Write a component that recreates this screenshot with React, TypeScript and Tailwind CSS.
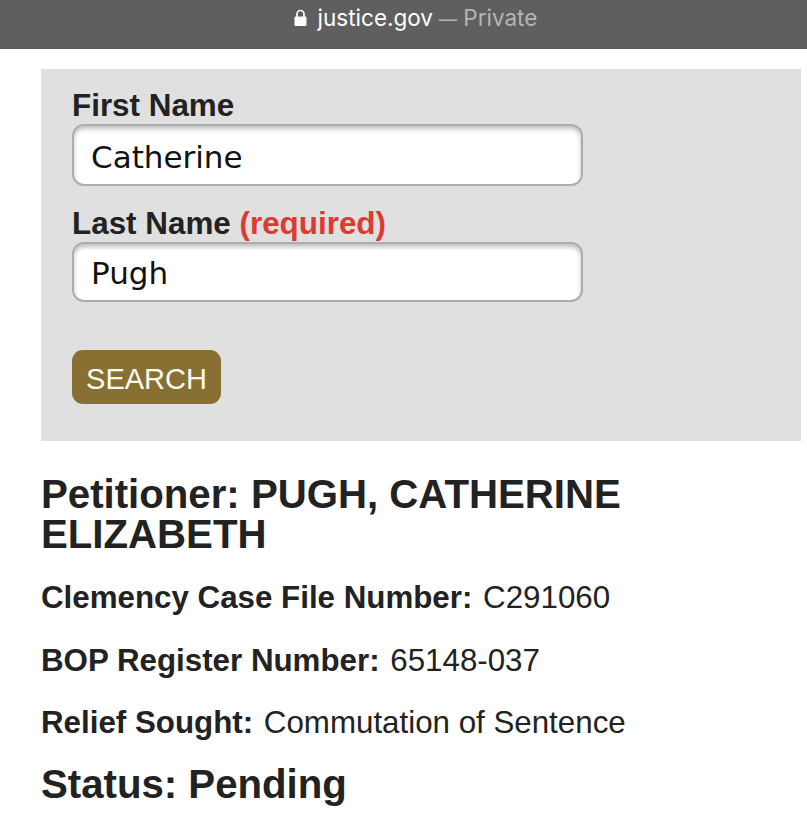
const sans = "font-['Liberation_Sans',Arial,sans-serif]";

function Field({ value, className }: { value: string; className: string }) {
  return (
    <input
      readOnly
      value={value}
      className={`block w-[511px] rounded-[12px] border-2 border-[#acacac] bg-white pl-[17px] font-['DejaVu_Sans',sans-serif] text-[31px] text-[#111] shadow-[inset_0_3px_4px_rgba(0,0,0,0.25)] outline-none ${className}`}
    />
  );
}

export default function App() {
  return (
    <div className={`min-h-[823px] w-[807px] overflow-hidden bg-white ${sans} text-[#222]`}>
      {/* Browser address bar */}
      <div className="flex h-[49px] items-start justify-center bg-[#5f5f5f] pt-[2px] pl-[24px] font-['Inter',sans-serif] text-[22.5px] leading-[32px]">
        <svg width="13" height="18" viewBox="0 0 13 18" className="mt-[7px] mr-[11px]" aria-hidden="true">
          <path d="M3 8V5a3.5 3.5 0 0 1 7 0v3" fill="none" stroke="#fff" strokeWidth="1.7" />
          <rect x="0.5" y="7.5" width="12" height="9.5" rx="1.2" fill="#fff" />
        </svg>
        <span className="text-white">justice.gov</span>
        <span className="ml-[6px] text-[#b4b4b4]">
          <span className="text-[18px]">—</span> Private
        </span>
      </div>

      {/* Search form */}
      <div className="mt-[20px] ml-[41px] h-[372px] w-[760px] bg-[#e0e0e0] pt-[19px] pl-[31px]">
        <label className="block text-[31.4px] leading-[36px] font-bold">First Name</label>
        <Field value="Catherine" className="h-[62px] pt-[4px]" />
        <label className="mt-[19px] block text-[31.4px] leading-[37px] font-bold">
          Last Name <span className="text-[#de3a2f]">(required)</span>
        </label>
        <Field value="Pugh" className="h-[60px] pt-[2px]" />
        <button className="mt-[48px] h-[54px] w-[149px] rounded-[11px] bg-[#877031] pt-[6px] text-center text-[29px] text-[#fdfbf2]">
          SEARCH
        </button>
      </div>

      {/* Case details */}
      <div className="pt-[34px] pr-[100px] pl-[41px]">
        <h1 className="text-[40.2px] leading-[40px] font-bold">Petitioner: PUGH, CATHERINE ELIZABETH</h1>
        <p className="mt-[23px] text-[31.3px] leading-[40px]">
          <b>Clemency Case File Number:</b> <span className="ml-[2px]">C291060</span>
        </p>
        <p className="mt-[23px] text-[31.3px] leading-[40px]">
          <b>BOP Register Number:</b> <span className="ml-[2px]">65148-037</span>
        </p>
        <p className="mt-[22px] text-[31.3px] leading-[40px]">
          <b>Relief Sought:</b> <span className="ml-[2px]">Commutation of Sentence</span>
        </p>
        <h2 className="mt-[22px] text-[40.2px] leading-[40px] font-bold">Status: Pending</h2>
      </div>
    </div>
  );
}
